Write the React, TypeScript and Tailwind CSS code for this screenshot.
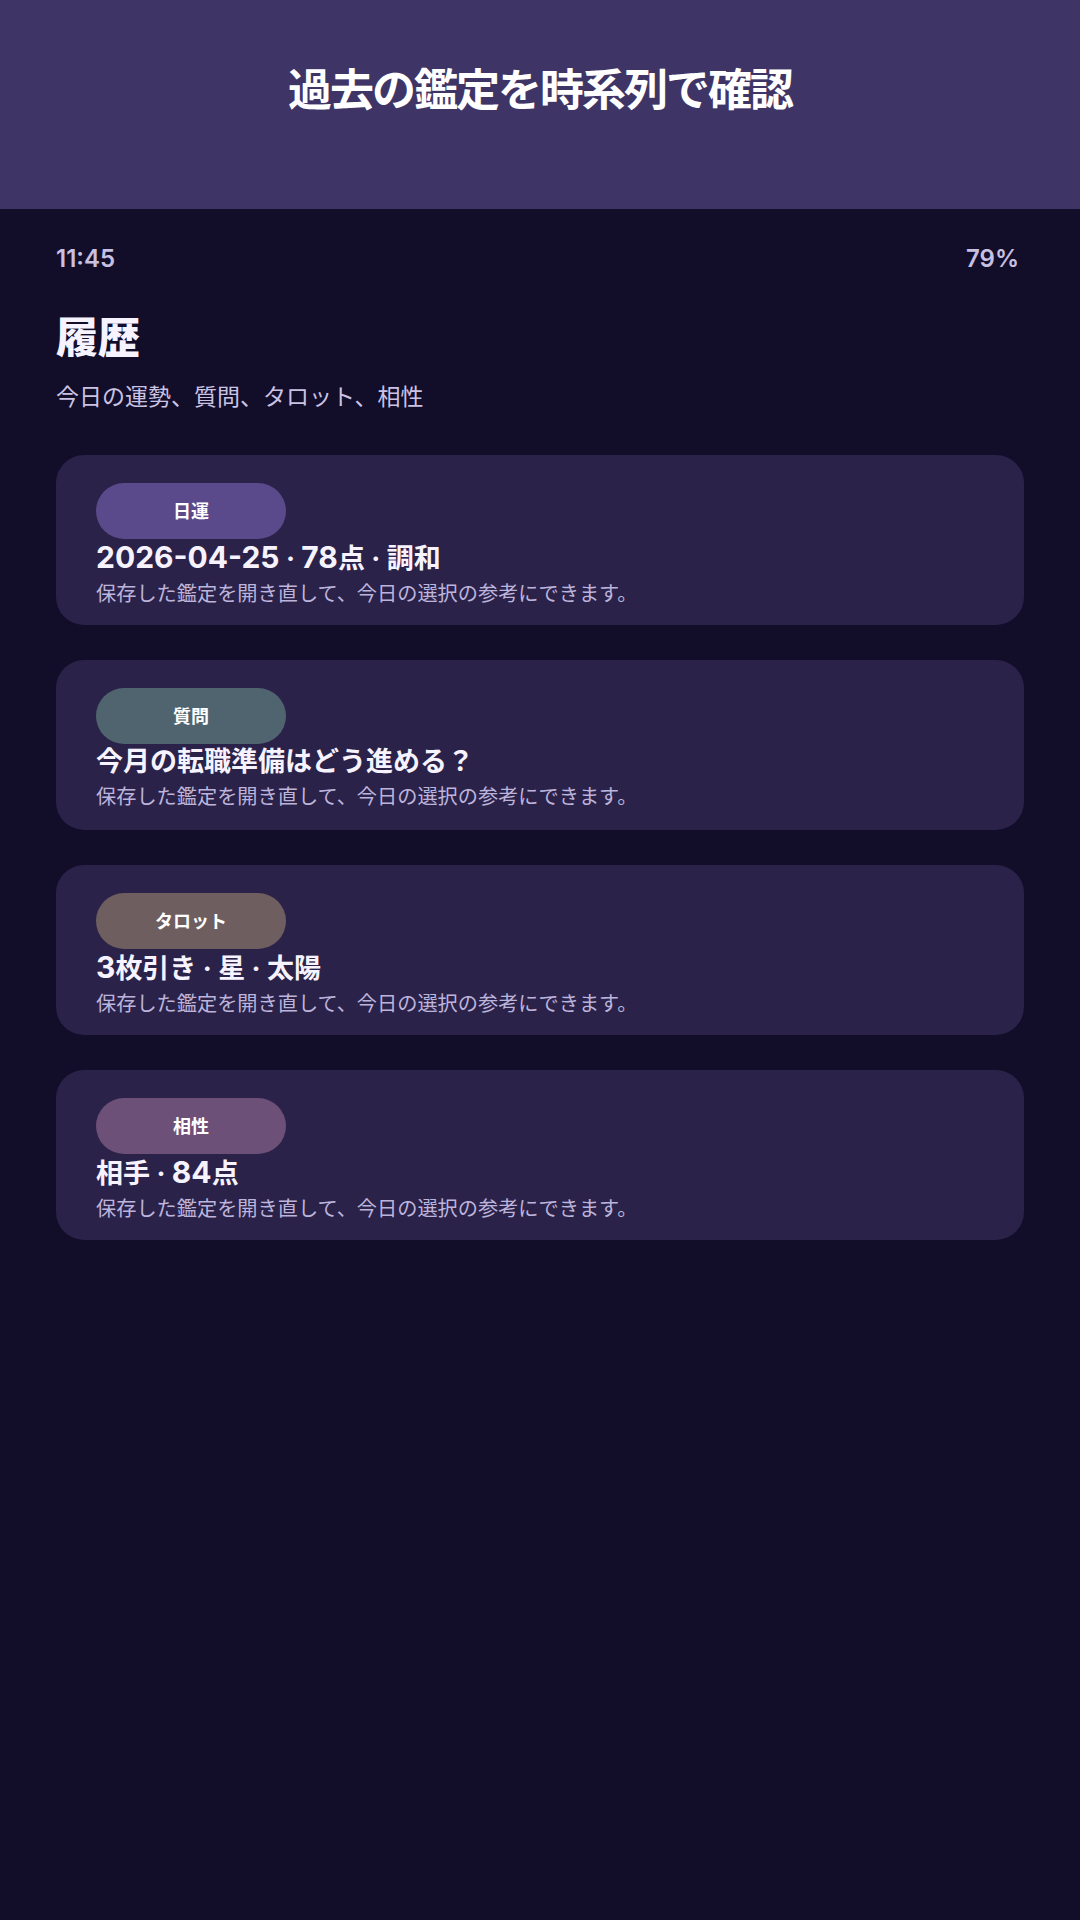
const items = [
  { tag: "日運", tagClass: "bg-[#5b4a8b]", title: "2026-04-25 · 78点 · 調和" },
  { tag: "質問", tagClass: "bg-[#506470]", title: "今月の転職準備はどう進める？" },
  { tag: "タロット", tagClass: "bg-[#6e5e5f]", title: "3枚引き · 星 · 太陽" },
  { tag: "相性", tagClass: "bg-[#6d5078]", title: "相手 · 84点" },
];

const note = "保存した鑑定を開き直して、今日の選択の参考にできます。";

// digits/latin in the titles render a bit larger than the kana/kanji
function Title({ text }: { text: string }) {
  const parts = text.split(/([0-9A-Za-z-]+)/).filter(Boolean);
  return (
    <div className="mt-[1px] text-[27px] font-bold leading-[34px] text-[#f6f3ff]">
      {parts.map((part, i) =>
        /^[0-9A-Za-z-]+$/.test(part) ? (
          <span key={i} className="text-[30px]">
            {part}
          </span>
        ) : (
          <span key={i}>{part}</span>
        )
      )}
    </div>
  );
}

function HistoryCard({ tag, tagClass, title }: { tag: string; tagClass: string; title: string }) {
  return (
    <div className="h-[170px] rounded-[28px] bg-[#2a2249] pl-[40px] pr-10 pt-7">
      <div
        className={`flex h-14 w-[190px] items-center justify-center rounded-full text-[18px] font-bold text-white ${tagClass}`}
      >
        {tag}
      </div>
      <Title text={title} />
      <div className="mt-1 text-[20.2px] leading-[28px] text-[#bdb4dc]">{note}</div>
    </div>
  );
}

export default function App() {
  return (
    <div
      className="min-h-[1920px] w-[1080px] bg-[#120e2a]"
      style={{ fontFamily: 'Inter, "Noto Sans CJK JP", sans-serif' }}
    >
      <header className="h-[209px] bg-[#3e3566] pt-[63px] text-center">
        <h1 className="text-[44px] font-bold leading-[54px] tracking-[-2px] text-white">
          過去の鑑定を時系列で確認
        </h1>
      </header>

      <main className="px-14">
        <div className="mt-[34px] flex items-center justify-between pr-[5px] text-[24px] font-semibold leading-8 text-[#c8c0e2]">
          <span>11:45</span>
          <span>79%</span>
        </div>

        <h2 className="mt-[37px] text-[42px] font-black leading-[52px] text-[#f6f3ff]">履歴</h2>
        <p className="mt-[17px] text-[23px] leading-8 text-[#cbc3e4]">今日の運勢、質問、タロット、相性</p>

        <div className="mt-[42px] flex flex-col gap-[35px]">
          {items.map((item) => (
            <HistoryCard key={item.tag} {...item} />
          ))}
        </div>
      </main>
    </div>
  );
}
